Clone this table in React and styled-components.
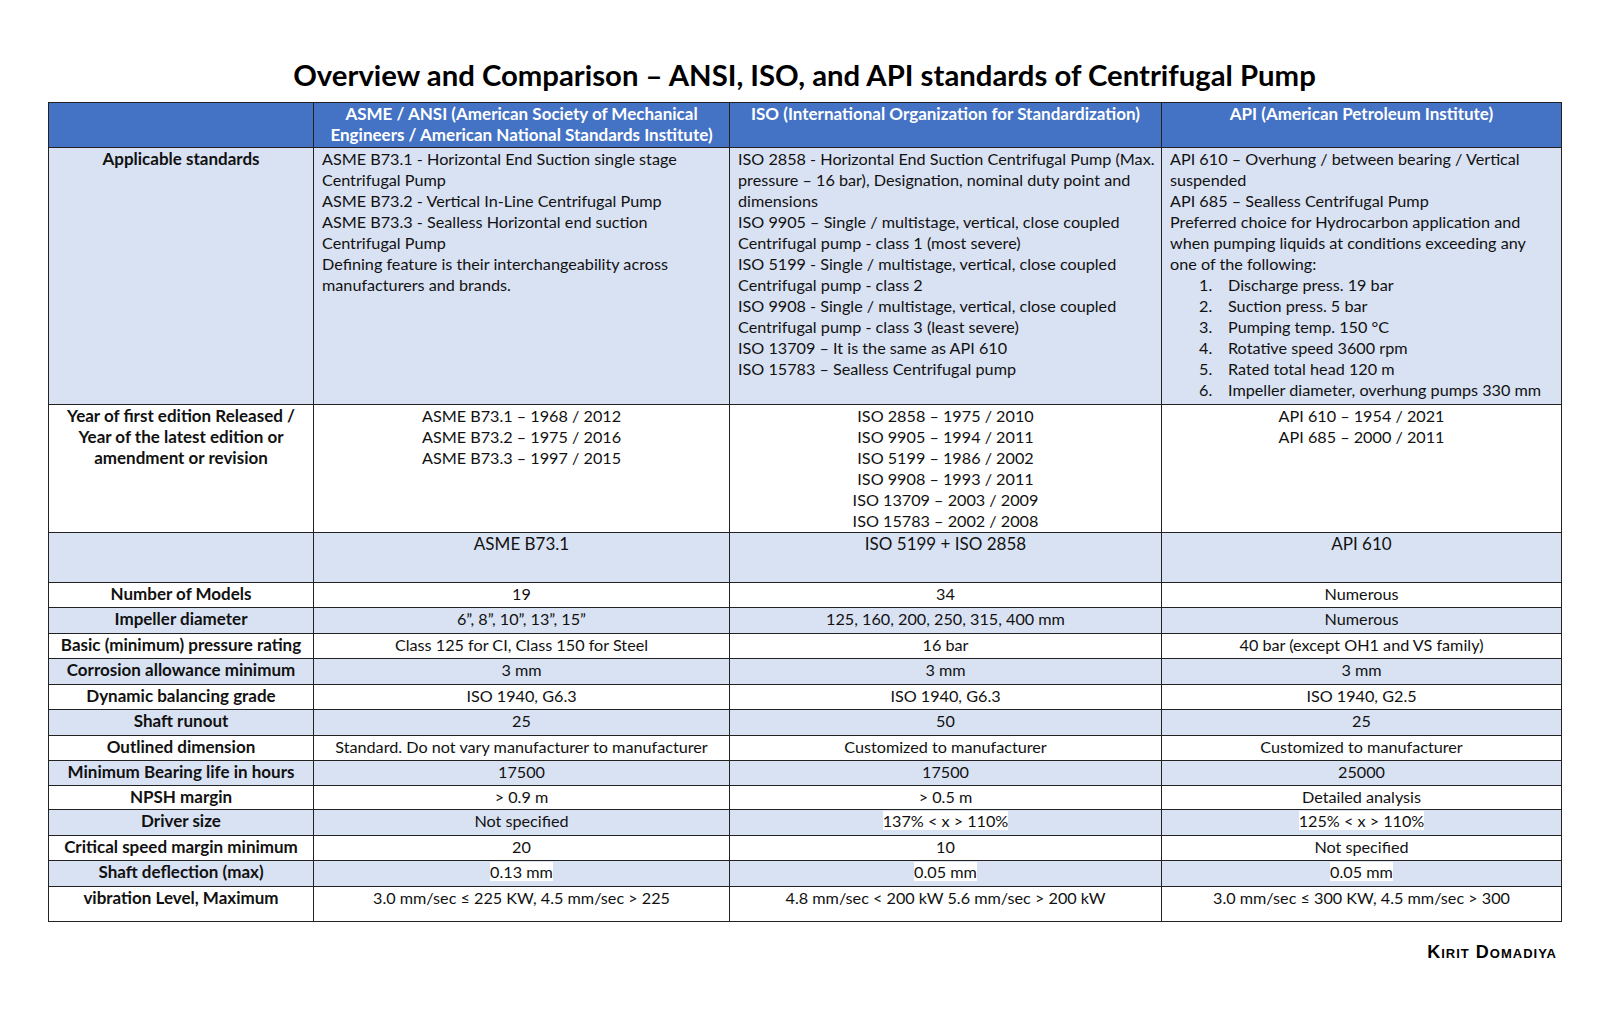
import React from "react";
import styled, { createGlobalStyle } from "styled-components";

const GlobalStyle = createGlobalStyle`
  body {
    margin: 0;
    background: #ffffff;
    font-family: Lato, "Liberation Sans", sans-serif;
    color: #111;
  }
`;

const Page = styled.div`
  padding: 58px 0 0 48px;
  width: 1513px;
`;

const Title = styled.h1`
  margin: 0 0 10px;
  height: 34px;
  line-height: 34px;
  font-size: 29.3px;
  font-weight: 700;
  text-align: center;
  color: #000;
`;

const Table = styled.table`
  width: 1513px;
  table-layout: fixed;
  border-collapse: collapse;
  border: 1px solid #222;
  font-size: 16.2px;
  line-height: 21px;
`;

const Col = styled.col`
  width: ${(p) => p.w}px;
`;

const Row = styled.tr`
  height: ${(p) => p.h}px;
  background: ${(p) => (p.shade ? "#d9e2f3" : "#ffffff")};
`;

const HeadCell = styled.th`
  background: #4472c4;
  color: #fff;
  font-size: 17px;
  font-weight: 700;
  text-align: center;
  vertical-align: top;
  padding: 0 6px;
  border: 1px solid #222;
`;

const Label = styled.td`
  font-size: 17px;
  font-weight: 700;
  text-align: center;
  vertical-align: top;
  padding: 0 6px;
  border: 1px solid #222;
`;

const Cell = styled.td`
  text-align: ${(p) => (p.left ? "left" : "center")};
  vertical-align: top;
  padding: ${(p) => (p.left ? `0 ${p.right ?? 4}px 0 8px` : "0 6px")};
  font-size: ${(p) => (p.big ? "17px" : "16.2px")};
  border: 1px solid #222;
`;

const Line = styled.div``;

const Highlight = styled.span`
  background: #ffffff;
`;

const List = styled.ol`
  margin: 0;
  padding: 0 0 0 29px;
  list-style: none;
`;

const Item = styled.li`
  display: flex;
`;

const Num = styled.span`
  width: 29px;
  flex: none;
`;

const Signature = styled.div`
  margin-top: 20px;
  padding-right: 4px;
  text-align: right;
  font-family: "Liberation Sans", Arial, sans-serif;
  font-variant: small-caps;
  font-weight: 700;
  font-size: 18px;
  letter-spacing: 1px;
  color: #000;
`;

const asme = [
  "ASME B73.1 - Horizontal End Suction single stage Centrifugal Pump",
  "ASME B73.2 - Vertical In-Line Centrifugal Pump",
  "ASME B73.3 - Sealless Horizontal end suction Centrifugal Pump",
  "Defining feature is their interchangeability across manufacturers and brands.",
];

const iso = [
  "ISO 2858 - Horizontal End Suction Centrifugal Pump (Max. pressure – 16 bar), Designation, nominal duty point and dimensions",
  "ISO 9905 – Single / multistage, vertical, close coupled Centrifugal pump - class 1 (most severe)",
  "ISO 5199 - Single / multistage, vertical, close coupled Centrifugal pump - class 2",
  "ISO 9908 - Single / multistage, vertical, close coupled Centrifugal pump - class 3 (least severe)",
  "ISO 13709 – It is the same as API 610",
  "ISO 15783 – Sealless Centrifugal pump",
];

const api = [
  "API 610 – Overhung / between bearing / Vertical suspended",
  "API 685 – Sealless Centrifugal Pump",
  "Preferred choice for Hydrocarbon application and when pumping liquids at conditions exceeding any one of the following:",
];

const limits = [
  "Discharge press. 19 bar",
  "Suction press. 5 bar",
  "Pumping temp. 150 °C",
  "Rotative speed 3600 rpm",
  "Rated total head 120 m",
  "Impeller diameter, overhung pumps 330 mm",
];

const years = [
  ["ASME B73.1 – 1968 / 2012", "ASME B73.2 – 1975 / 2016", "ASME B73.3 – 1997 / 2015"],
  [
    "ISO 2858 – 1975 / 2010",
    "ISO 9905 – 1994 / 2011",
    "ISO 5199 – 1986 / 2002",
    "ISO 9908 – 1993 / 2011",
    "ISO 13709 – 2003 / 2009",
    "ISO 15783 – 2002 / 2008",
  ],
  ["API 610 – 1954 / 2021", "API 685 – 2000 / 2011"],
];

// value strings starting with "*" get a white text highlight
const specs = [
  ["Number of Models", ["19", "34", "Numerous"], 25],
  ["Impeller diameter", ["6”, 8”, 10”, 13”, 15”", "125, 160, 200, 250, 315, 400 mm", "Numerous"], 26],
  ["Basic (minimum) pressure rating", ["Class 125 for CI, Class 150 for Steel", "16 bar", "40 bar (except OH1 and VS family)"], 25],
  ["Corrosion allowance minimum", ["3 mm", "3 mm", "3 mm"], 26],
  ["Dynamic balancing grade", ["ISO 1940, G6.3", "ISO 1940, G6.3", "ISO 1940, G2.5"], 25],
  ["Shaft runout", ["25", "50", "25"], 26],
  ["Outlined dimension", ["Standard. Do not vary manufacturer to manufacturer", "Customized to manufacturer", "Customized to manufacturer"], 25],
  ["Minimum Bearing life in hours", ["17500", "17500", "25000"], 25],
  ["NPSH margin", ["> 0.9 m", "> 0.5 m", "Detailed analysis"], 24],
  ["Driver size", ["Not specified", "*137% < x > 110%", "*125% < x > 110%"], 26],
  ["Critical speed margin minimum", ["20", "10", "Not specified"], 25],
  ["Shaft deflection (max)", ["*0.13 mm", "*0.05 mm", "*0.05 mm"], 26],
  ["vibration Level, Maximum", ["3.0 mm/sec ≤ 225 KW, 4.5 mm/sec > 225", "4.8 mm/sec < 200 kW 5.6 mm/sec > 200 kW", "3.0 mm/sec ≤ 300 KW, 4.5 mm/sec > 300"], 35],
];

const Value = ({ text }) =>
  text.startsWith("*") ? <Highlight>{text.slice(1)}</Highlight> : text;

export default function App() {
  return (
    <Page>
      <GlobalStyle />
      <Title>Overview and Comparison – ANSI, ISO, and API standards of Centrifugal Pump</Title>
      <Table>
        <colgroup>
          <Col w={265} />
          <Col w={416} />
          <Col w={432} />
          <Col w={400} />
        </colgroup>
        <thead>
          <Row h={45}>
            <HeadCell />
            <HeadCell>
              ASME / ANSI (American Society of Mechanical Engineers / American National Standards Institute)
            </HeadCell>
            <HeadCell>ISO (International Organization for Standardization)</HeadCell>
            <HeadCell>API (American Petroleum Institute)</HeadCell>
          </Row>
        </thead>
        <tbody>
          <Row h={257} shade>
            <Label>Applicable standards</Label>
            <Cell left right={10}>
              {asme.map((t) => (
                <Line key={t}>{t}</Line>
              ))}
            </Cell>
            <Cell left right={4}>
              {iso.map((t) => (
                <Line key={t}>{t}</Line>
              ))}
            </Cell>
            <Cell left right={16}>
              {api.map((t) => (
                <Line key={t}>{t}</Line>
              ))}
              <List>
                {limits.map((t, i) => (
                  <Item key={t}>
                    <Num>{i + 1}.</Num>
                    {t}
                  </Item>
                ))}
              </List>
            </Cell>
          </Row>
          <Row h={128}>
            <Label>
              Year of first edition Released / Year of the latest edition or amendment or revision
            </Label>
            {years.map((col, i) => (
              <Cell key={i}>
                {col.map((t) => (
                  <Line key={t}>{t}</Line>
                ))}
              </Cell>
            ))}
          </Row>
          <Row h={50} shade>
            <Label />
            <Cell big>ASME B73.1</Cell>
            <Cell big>ISO 5199 + ISO 2858</Cell>
            <Cell big>API 610</Cell>
          </Row>
          {specs.map(([label, values, h], i) => (
            <Row key={label} h={h} shade={i % 2 === 1}>
              <Label>{label}</Label>
              {values.map((v, j) => (
                <Cell key={j}>
                  <Value text={v} />
                </Cell>
              ))}
            </Row>
          ))}
        </tbody>
      </Table>
      <Signature>Kirit Domadiya</Signature>
    </Page>
  );
}
